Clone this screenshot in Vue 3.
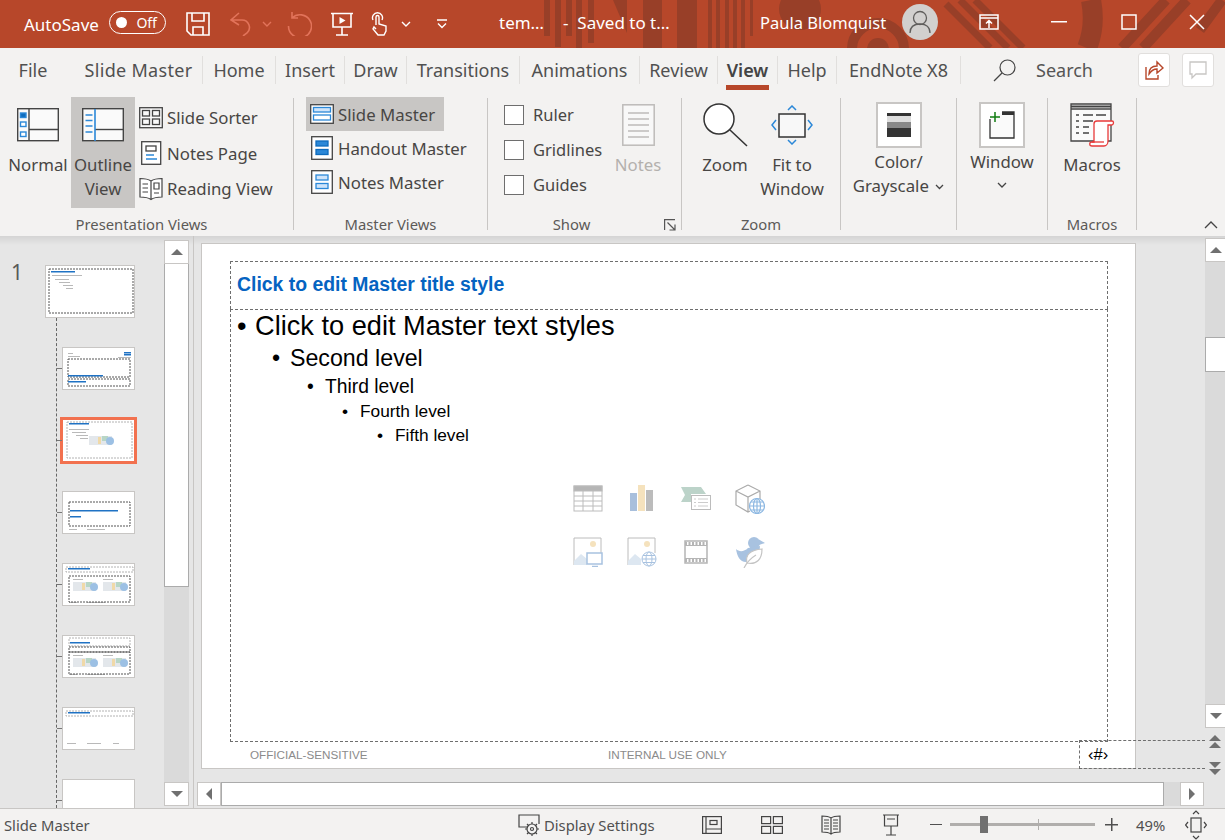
<script setup>
const tabs = [
  { label: 'File', w: 66 },
  { label: 'Slide Master', w: 137 },
  { label: 'Home', w: 73 },
  { label: 'Insert', w: 69 },
  { label: 'Draw', w: 62 },
  { label: 'Transitions', w: 113 },
  { label: 'Animations', w: 120 },
  { label: 'Review', w: 78 },
  { label: 'View', w: 60, active: true },
  { label: 'Help', w: 59 },
  { label: 'EndNote X8', w: 124 }
]

const levels = [
  'Click to edit Master text styles',
  'Second level',
  'Third level',
  'Fourth level',
  'Fifth level'
]

const footDots = [[4, 35, 9], [24, 35, 14], [50, 35, 6]]
const thumbs = [
  {
    first: true,
    dash: [[3, 3, 84, 44], [3, 7, 84, 0]],
    blue: [[5, 5, 24]],
    grey: [[6, 9, 30], [9, 13, 14], [13, 16, 11], [17, 19, 10], [20, 22, 7]]
  },
  {
    dash: [[5, 11, 62, 18], [5, 31, 62, 7]],
    blue: [[5, 27, 35], [5, 33, 18], [61, 4, 7], [61, 6, 7]],
    grey: [[5, 5, 5], [5, 8, 12], [55, 9, 13]]
  },
  {
    selected: true,
    light: [[4, 2, 65, 36], [4, 7, 65, 0]],
    blue: [[6, 3, 20]],
    grey: [[6, 9, 20], [9, 12, 14], [13, 15, 12], [17, 18, 8]],
    pics: [[26, 16]]
  },
  {
    dash: [[6, 10, 61, 24], [6, 28, 61, 0]],
    blue: [[7, 18, 48], [7, 24, 11]],
    grey: [[6, 37, 8], [24, 37, 18]]
  },
  {
    light: [[3, 3, 67, 5]],
    dash: [[6, 12, 61, 26], [36, 12, 0, 26]],
    blue: [[5, 4, 22]],
    grey: [[10, 15, 10], [40, 15, 10], [6, 38, 8], [24, 38, 18]],
    pics: [[10, 18], [40, 18]]
  },
  {
    light: [[6, 2, 61, 8]],
    dash: [[6, 11, 61, 5], [6, 16, 61, 22], [36, 16, 0, 22]],
    blue: [[7, 6, 20]],
    grey: [[10, 19, 10], [40, 19, 10], [6, 38, 8], [24, 38, 18]],
    pics: [[10, 22], [40, 22]]
  },
  {
    light: [[3, 3, 67, 5], [3, 37, 67, 0]],
    blue: [[5, 4, 22]],
    grey: footDots
  },
  {}
]
</script>

<template>
  <div class="app">
    <header class="titlebar">
      <svg class="pattern" width="1225" height="48">
        <g fill="#983f28">
          <rect x="544" width="6" height="36" />
          <rect x="555" width="6" height="47" />
          <rect x="566" width="6" height="36" />
          <rect x="576" width="6" height="48" />
          <rect x="588" width="6" height="43" />
          <path d="M613 0h14v33z" />
          <rect x="643" width="19" height="48" />
          <rect x="677" width="20" height="48" />
          <rect x="708" width="4" height="48" />
          <rect x="716" width="4" height="48" />
          <rect x="725" width="4" height="48" />
          <rect x="733" width="4" height="48" />
          <rect x="741" width="4" height="48" />
          <rect x="750" width="3" height="36" />
          <circle cx="800" cy="9" r="21" />
          <circle cx="878" cy="49" r="11" />
        </g>
        <g fill="none" stroke="#983f28">
          <circle cx="878" cy="49" r="26" stroke-width="10" />
          <path d="M1091 0q5 26-4 48" stroke-width="20" />
          <path d="M946 4l44 44M960 0l48 48M975 0l48 48" stroke-width="7" />
          <path d="M1122 48l44-48M1143 48l44-48M1200 30l22-30" stroke-width="10" />
        </g>
      </svg>
      <span class="autosave">AutoSave</span>
      <span class="toggle"><i></i>Off</span>
      <svg class="qa save" width="24" height="24" viewBox="0 0 24 24" fill="none" stroke="#fff" stroke-width="1.6">
        <path d="M1 1h22v22H5l-4-4zM6 1v8h12V1M7 23v-8h10v8" />
      </svg>
      <svg class="qa undo" width="23" height="24" viewBox="0 0 23 24" fill="none" stroke="#e2735a" stroke-width="1.6">
        <path d="M9 1L1 8l8 5M1 8h11a7.500 7.500 0 0 1 5 13l-4 3" />
      </svg>
      <svg class="qa chev faded" width="10" height="6" viewBox="0 0 10 6" fill="none" stroke="#e2735a" stroke-width="1.4"><path d="M1 1l4 4 4-4" /></svg>
      <svg class="qa redo" width="25" height="25" viewBox="0 0 25 25" fill="none" stroke="#e2735a" stroke-width="1.6">
        <path d="M5 1v6h6M5 7a11.500 11.500 0 1 1-3.500 8" />
      </svg>
      <svg class="qa show" width="24" height="24" viewBox="0 0 24 24" fill="none" stroke="#fff" stroke-width="1.6">
        <path d="M1 1.500h22M3 1.500V15h18V1.500M12 15v8M6 23h12" />
        <path d="M9.500 5l6 3.500-6 3.500z" fill="#fff" stroke="none" />
      </svg>
      <svg class="qa touch" width="18" height="25" viewBox="0 0 18 25" fill="none" stroke="#fff" stroke-width="1.4">
        <path d="M2 9a5 5 0 1 1 9 0M5 14V6a1.500 1.500 0 0 1 3 0v7l7 2v5l-2 4H7l-5-6 1-2 2 2" />
      </svg>
      <svg class="qa chev chev2" width="10" height="6" viewBox="0 0 10 6" fill="none" stroke="#fff" stroke-width="1.4"><path d="M1 1l4 4 4-4" /></svg>
      <svg class="qa more" width="12" height="10" viewBox="0 0 12 10" fill="none" stroke="#fff" stroke-width="1.4"><path d="M1 1h10M2 4.500l4 4 4-4" /></svg>
      <span class="doc">tem…</span>
      <span class="doc saved">-&nbsp; Saved to t…</span>
      <span class="user">Paula Blomquist</span>
      <svg class="avatar" width="36" height="36" viewBox="0 0 36 36" fill="none" stroke="#605e5c" stroke-width="1.3">
        <circle cx="18" cy="18" r="18" fill="#d2d0ce" stroke="none" />
        <circle cx="18" cy="14" r="6.500" />
        <path d="M8 29c0-6 4-9 10-9s10 3 10 9" />
      </svg>
      <svg class="win opts" width="20" height="16" viewBox="0 0 20 16" fill="none" stroke="#fff" stroke-width="1.5">
        <path d="M1 1h18v14H1zM1 4h18M10 14V7M7 9.500l3-3 3 3" />
      </svg>
      <svg class="win mini" width="16" height="2" viewBox="0 0 16 2"><rect width="16" height="1.500" fill="#fff" /></svg>
      <svg class="win maxi" width="16" height="16" viewBox="0 0 16 16" fill="none" stroke="#fff" stroke-width="1.5"><rect x="1" y="1" width="14" height="14" /></svg>
      <svg class="win close" width="16" height="16" viewBox="0 0 16 16" fill="none" stroke="#fff" stroke-width="1.5"><path d="M1 1l14 14M15 1L1 15" /></svg>
    </header>

    <nav class="tabs">
      <div v-for="t in tabs" :key="t.label" class="tab" :class="{ active: t.active }" :style="{ width: t.w + 'px' }">
        <span>{{ t.label }}</span>
      </div>
      <svg class="search-icon" width="23" height="23" viewBox="0 0 23 23" fill="none" stroke="#444" stroke-width="1.2">
        <circle cx="14.500" cy="8.500" r="7.500" /><path d="M9 14l-8 8" />
      </svg>
      <span class="search">Search</span>
      <div class="tab-btn share">
        <svg width="20" height="22" viewBox="0 0 20 22" fill="none" stroke="#b7472a" stroke-width="1.400">
          <path d="M2 8v12h12v-4M5 15c0-5 3-8 8-8V3l6 6-6 5v-4c-4 0-6 2-8 5z" />
        </svg>
      </div>
      <div class="tab-btn note">
        <svg width="20" height="20" viewBox="0 0 20 20" fill="none" stroke="#c8c6c4" stroke-width="1.300">
          <path d="M2 2h16v12H8l-4 4v-4H2z" />
        </svg>
      </div>
    </nav>

    <section class="ribbon">
      <div class="group g1">
        <div class="group-body">
          <div class="big normal">
            <div class="big-icon">
              <svg width="42" height="34" viewBox="0 0 42 34" fill="none" stroke="#444" stroke-width="1.400">
                <rect x=".7" y=".7" width="40.6" height="32" fill="#fafafa" />
                <path d="M12 1v32M12 21.500h29" />
                <g fill="#fff" stroke="#2b88d8"><rect x="3.500" y="5" width="5.500" height="4.500" fill="#0f6cbd" /><rect x="3.500" y="14" width="5.500" height="4.500" /><rect x="3.500" y="24" width="5.500" height="4.500" /></g>
              </svg>
            </div>
            <span>Normal</span>
          </div>
          <div class="big on outline">
            <div class="big-icon">
              <svg width="42" height="34" viewBox="0 0 42 34" fill="none" stroke="#444" stroke-width="1.400">
                <rect x=".7" y=".7" width="40.6" height="32" fill="#fafafa" />
                <path d="M13 21.500h28" />
                <path d="M13 1v32" stroke="#2b88d8" stroke-width="1.600" />
                <path d="M3.500 7h7M3.500 12.500h7M3.500 18h7M3.500 24h7" stroke="#2b88d8" />
              </svg>
            </div>
            <span>Outline</span>
            <span>View</span>
          </div>
          <div class="rows view-rows">
            <div class="row">
              <svg width="24" height="22" viewBox="0 0 24 22" fill="none" stroke="#444" stroke-width="1.300">
                <rect x=".7" y=".7" width="22.600" height="20" fill="#fafafa" /><rect x="3.500" y="3.500" width="7" height="5.500" /><rect x="13.500" y="3.500" width="7" height="5.500" /><rect x="3.500" y="12" width="7" height="5.500" /><rect x="13.500" y="12" width="7" height="5.500" />
              </svg>
              <span>Slide Sorter</span>
            </div>
            <div class="row">
              <svg width="24" height="24" viewBox="0 0 24 24" fill="none" stroke="#444" stroke-width="1.300">
                <rect x="2.700" y=".7" width="19" height="22.600" fill="#fff" /><rect x="7" y="5" width="10" height="5" /><path d="M7 14h8M7 18h11" stroke="#2b88d8" />
              </svg>
              <span>Notes Page</span>
            </div>
            <div class="row">
              <svg width="24" height="24" viewBox="0 0 24 24" fill="none" stroke="#444" stroke-width="1.200">
                <path d="M12 4C9 2 5 1.500 1 1.500V20c4 0 8 .5 11 2.500C15 20.500 19 20 23 20V1.500C19 1.500 15 2 12 4zM12 4v18.500" fill="#fff" />
                <path d="M3.500 7H9M3.500 11H9M3.500 15H9M15 6h5v6h-5zM15 16h5" />
              </svg>
              <span>Reading View</span>
            </div>
          </div>
        </div>
        <div class="group-label">Presentation Views</div>
      </div>

      <div class="group g2">
        <div class="group-body">
          <div class="rows master-rows">
            <div class="row on">
              <svg width="24" height="20" viewBox="0 0 24 20" fill="none" stroke="#444" stroke-width="1.300">
                <rect x=".7" y=".7" width="22.600" height="18.600" fill="#fff" />
                <g stroke="#2b88d8" fill="#cfe4fa"><rect x="3.500" y="3.500" width="17" height="4.500" /><rect x="3.500" y="11" width="17" height="5" fill="#fff" /></g>
              </svg>
              <span>Slide Master</span>
            </div>
            <div class="row">
              <svg class="narrow" width="22" height="24" viewBox="0 0 22 24" fill="none" stroke="#444" stroke-width="1.300">
                <rect x=".7" y=".7" width="20.600" height="22.600" fill="#fff" />
                <g stroke="#0f6cbd" fill="#2b88d8"><rect x="5" y="5" width="12" height="5" /><rect x="5" y="13.500" width="12" height="5" /></g>
              </svg>
              <span>Handout Master</span>
            </div>
            <div class="row">
              <svg class="narrow" width="22" height="24" viewBox="0 0 22 24" fill="none" stroke="#444" stroke-width="1.300">
                <rect x=".7" y=".7" width="20.600" height="22.600" fill="#fff" />
                <g stroke="#2b88d8" fill="#cfe4fa"><rect x="5" y="5" width="12" height="5" /><rect x="5" y="13.500" width="12" height="5" /></g>
              </svg>
              <span>Notes Master</span>
            </div>
          </div>
        </div>
        <div class="group-label">Master Views</div>
      </div>

      <div class="group g3">
        <div class="group-body">
          <div class="rows check-rows">
            <label class="check"><i></i>Ruler</label>
            <label class="check"><i></i>Gridlines</label>
            <label class="check"><i></i>Guides</label>
          </div>
          <div class="big disabled notes-btn">
            <div class="big-icon">
              <svg width="33" height="42" viewBox="0 0 33 42" fill="none" stroke="#bdbbb9" stroke-width="1.500">
                <rect x=".8" y=".8" width="31.400" height="40.400" fill="#f8f8f8" /><path d="M6 9h21M6 15h21M6 21h21M6 27h21M6 33h21" />
              </svg>
            </div>
            <span>Notes</span>
          </div>
        </div>
        <div class="group-label">Show</div>
        <svg class="launcher" width="12" height="12" viewBox="0 0 12 12" fill="none" stroke="#555" stroke-width="1.200">
          <path d="M.6 11V.6H11M3.500 3.500l7 7M11 5.500V11H5.500" />
        </svg>
      </div>

      <div class="group g4">
        <div class="group-body">
          <div class="big zoom-btn">
            <div class="big-icon">
              <svg width="45" height="44" viewBox="0 0 45 44" fill="none" stroke="#333" stroke-width="1.500">
                <circle cx="16" cy="16" r="15" fill="#fff" /><path d="M27 27l17 16" />
              </svg>
            </div>
            <span>Zoom</span>
          </div>
          <div class="big zoom-btn">
            <div class="big-icon">
              <svg width="42" height="40" viewBox="0 0 42 40" fill="none" stroke="#2b88d8" stroke-width="1.500">
                <rect x="8" y="9" width="26" height="23" fill="#f8f8f8" stroke="#333" />
                <path d="M17 5l4-4 4 4M17 35l4 4 4-4M5 15l-4 5 4 5M37 15l4 5-4 5" />
              </svg>
            </div>
            <span>Fit to</span>
            <span>Window</span>
          </div>
        </div>
        <div class="group-label">Zoom</div>
      </div>

      <div class="group g5">
        <div class="group-body">
          <div class="big tall">
            <div class="big-icon">
              <div class="frame">
                <svg width="24" height="24" viewBox="0 0 24 24">
                  <rect width="24" height="3" fill="#333" /><rect y="3" width="24" height="6" fill="#ddd" /><rect y="9" width="24" height="6" fill="#888" /><rect y="15" width="24" height="9" fill="#333" />
                </svg>
              </div>
            </div>
            <span>Color/</span>
            <span class="with-chev">Grayscale
              <svg width="9" height="6" viewBox="0 0 9 6" fill="none" stroke="#444" stroke-width="1.300"><path d="M1 1l3.500 3.500L8 1" /></svg>
            </span>
          </div>
        </div>
        <div class="group-label"></div>
      </div>

      <div class="group g6">
        <div class="group-body">
          <div class="big tall">
            <div class="big-icon">
              <div class="frame">
                <svg width="26" height="28" viewBox="0 0 26 28" fill="none" stroke="#333" stroke-width="1.300">
                  <path d="M1 8v19h24V1H13" fill="#fafafa" /><path d="M13 2.500h12" stroke-width="3" />
                  <path d="M6 1v10M1 6h10" stroke="#107c10" stroke-width="1.500" />
                </svg>
              </div>
            </div>
            <span>Window</span>
            <svg class="under-chev" width="10" height="6" viewBox="0 0 10 6" fill="none" stroke="#444" stroke-width="1.300"><path d="M1 1l4 4 4-4" /></svg>
          </div>
        </div>
        <div class="group-label"></div>
      </div>

      <div class="group g7">
        <div class="group-body">
          <div class="big">
            <div class="big-icon">
              <svg width="45" height="44" viewBox="0 0 45 44" fill="none" stroke="#444" stroke-width="1.300">
                <path d="M1 1h40v37H1zM1 6h40" fill="#fafafa" />
                <path d="M1 3.500h40" stroke-width="2" />
                <path d="M6 12h3M13 12h10M26 12h10M6 18h3M13 18h10M6 24h3M13 24h6M6 30h3M13 30h6" />
                <path d="M24 21c0-2 1-3 3-3h15c2 0 2 3 0 4h-4v16c0 3-2 5-4 5H22c-3 0-3-4 0-4h2z" stroke="#e83a3a" fill="#fff" />
                <path d="M22 39h12" stroke="#e83a3a" />
              </svg>
            </div>
            <span>Macros</span>
          </div>
        </div>
        <div class="group-label">Macros</div>
      </div>

      <svg class="collapse" width="14" height="8" viewBox="0 0 14 8" fill="none" stroke="#444" stroke-width="1.300"><path d="M1 7l6-6 6 6" /></svg>
    </section>

    <main class="workspace">
      <aside class="thumbs">
        <span class="slide-no">1</span>
        <div class="tree"></div>
        <div v-for="(t, i) in thumbs" :key="i" class="thumb" :class="{ first: t.first, selected: t.selected }">
          <svg width="100%" height="100%">
            <g v-if="t.grey" fill="#8a8a8a" opacity=".6">
              <rect v-for="(g, k) in t.grey" :key="k" :x="g[0]" :y="g[1]" :width="g[2]" height="1" />
            </g>
            <g v-if="t.pics">
              <g v-for="(p, k) in t.pics" :key="k" :transform="`translate(${p[0]} ${p[1]})`">
                <rect width="23" height="9" fill="#e3e7eb" />
                <rect x="9" y="1" width="3" height="7" fill="#f0d9a8" />
                <rect x="13" width="6" height="5" fill="#b8d6c6" />
                <circle cx="21" cy="5" r="4" fill="#9cc0e4" />
              </g>
            </g>
            <g v-if="t.light" fill="none" stroke="#a9a9a9" stroke-width=".9" stroke-dasharray="2 1">
              <rect v-for="(d, k) in t.light" :key="k" :x="d[0]" :y="d[1]" :width="d[2]" :height="d[3]" />
            </g>
            <g v-if="t.dash" fill="none" stroke="#555" stroke-width="1" stroke-dasharray="2 1">
              <rect v-for="(d, k) in t.dash" :key="k" :x="d[0]" :y="d[1]" :width="d[2]" :height="d[3]" />
            </g>
            <g v-if="t.blue" fill="#1f72c4">
              <rect v-for="(b, k) in t.blue" :key="k" :x="b[0]" :y="b[1]" :width="b[2]" height="1.500" />
            </g>
          </svg>
        </div>
      </aside>

      <div class="vbar left-bar">
        <div class="sbtn"><i class="tri up"></i></div>
        <div class="sthumb"></div>
        <div class="strack"></div>
        <div class="sbtn"><i class="tri down"></i></div>
      </div>

      <div class="editor">
        <div class="editor-top">
          <div class="stage">
            <article class="slide">
              <div class="ph title-ph">Click to edit Master title style</div>
              <div class="ph body-ph">
                <ul>
                  <li v-for="(text, i) in levels" :key="text" :class="'lv' + (i + 1)">
                    <span class="bullet">•</span>{{ text }}
                  </li>
                </ul>
                <div class="ph-icons">
                  <svg width="30" height="27" viewBox="0 0 30 27" fill="none" stroke="#bcbcbc">
                    <rect x="1" y="1" width="28" height="25" /><rect x="1" y="1" width="28" height="5" fill="#b5b5b5" /><path d="M1 11h28M1 16h28M1 21h28M10 6v20M20 6v20" />
                  </svg>
                  <svg width="24" height="27" viewBox="0 0 24 27">
                    <rect y="8" width="7" height="18" fill="#a8bfdc" /><rect x="8" width="7" height="26" fill="#f5e2bd" /><rect x="16" y="5" width="7" height="21" fill="#bcbcbc" />
                  </svg>
                  <svg width="30" height="25" viewBox="0 0 30 25">
                    <path d="M0 1h20l5 7H10v8H0l4-7z" fill="#bcd3c9" /><rect x="10.500" y="9.500" width="19" height="14" fill="#fff" stroke="#bcbcbc" /><path d="M17 13h10M17 16.500h10M17 20h10" stroke="#ccc" /><path d="M13 13h2M13 16.500h2M13 20h2" stroke="#ccc" />
                  </svg>
                  <svg width="30" height="30" viewBox="0 0 30 30" fill="none" stroke="#aaa" stroke-width="1.200">
                    <path d="M13 1l12 6v8M13 1L1 7v14l12 7 2-1M1 7l12 6 12-6M13 13v15" fill="#fff" />
                    <circle cx="22" cy="22" r="7.500" fill="#fff" stroke="#8db8e2" /><path d="M14.500 22h15M22 14.500v15M16 18h12M16 26h12" stroke="#8db8e2" /><ellipse cx="22" cy="22" rx="3.500" ry="7.500" stroke="#8db8e2" />
                  </svg>
                  <svg width="30" height="30" viewBox="0 0 30 30">
                    <path d="M1 28V1h27v15" fill="#fff" stroke="#bcbcbc" />
                    <path d="M1 28v-4l7-7 6 5v6z" fill="#dde7f1" /><circle cx="20" cy="7" r="3" fill="#f5e2bd" />
                    <rect x="14" y="16" width="15" height="11" fill="#fff" stroke="#a8c2e0" stroke-width="1.500" /><path d="M19 29.500h6" stroke="#a8c2e0" stroke-width="1.500" />
                  </svg>
                  <svg width="30" height="30" viewBox="0 0 30 30">
                    <path d="M1 28V1h27v15" fill="#fff" stroke="#bcbcbc" />
                    <path d="M1 28v-4l7-7 6 5v6z" fill="#dde7f1" /><circle cx="20" cy="7" r="3" fill="#f5e2bd" />
                    <g fill="#fff" stroke="#a8c2e0"><circle cx="22" cy="22" r="7" /><ellipse cx="22" cy="22" rx="3" ry="7" /><path d="M15 22h14M16 18.500h12M16 25.500h12" /></g>
                  </svg>
                  <svg width="24" height="24" viewBox="0 0 24 24">
                    <rect x="1" y="1" width="22" height="22" fill="#fff" stroke="#b5b5b5" stroke-width="1.500" />
                    <path d="M1 3.500h22M1 20.500h22" stroke="#b5b5b5" stroke-width="3" stroke-dasharray="2 1.500" />
                    <path d="M1 5.500h22M1 18.500h22" stroke="#b5b5b5" />
                  </svg>
                  <svg width="29" height="32" viewBox="0 0 29 32">
                    <circle cx="18" cy="7" r="6" fill="#a8c2e0" />
                    <path d="M23 3.500L29 7l-6 2zM0 13c3 3 8 3 12-1l12-2c0 9-6 14-14 16C4 26 1 20 0 13z" fill="#a8c2e0" />
                    <path d="M11 27c-2-8 3-13 15-14 0 10-5 16-15 14z" fill="#fff" stroke="#c4c4c4" stroke-width="1.200" /><path d="M8 32c3-6 7-10 12-13" fill="none" stroke="#c4c4c4" stroke-width="1.200" />
                  </svg>
                </div>
              </div>
              <footer class="slide-foot">
                <span class="foot-left">OFFICIAL-SENSITIVE</span>
                <span>INTERNAL USE ONLY</span>
              </footer>
              <div class="slide-num">‹#›</div>
            </article>
          </div>
          <div class="vbar right-bar">
            <div class="sbtn"><i class="tri up"></i></div>
            <div class="strack r1"></div>
            <div class="sthumb"></div>
            <div class="strack"></div>
            <div class="sbtn"><i class="tri down"></i></div>
            <div class="page-nav">
              <span class="dbl"><i class="tri up small"></i><i class="tri up small"></i></span>
              <span class="dbl"><i class="tri down small"></i><i class="tri down small"></i></span>
            </div>
          </div>
        </div>
        <div class="hbar">
          <div class="sbtn wide"><i class="tri left"></i></div>
          <div class="hthumb"></div>
          <div class="htrack"></div>
          <div class="sbtn wide"><i class="tri right"></i></div>
        </div>
      </div>
    </main>

    <footer class="status">
      <span class="st-label">Slide Master</span>
      <svg class="st-display" width="24" height="24" viewBox="0 0 24 24" fill="none" stroke="#444" stroke-width="1.200">
        <path d="M10 14H1V2h20v9" />
        <circle cx="14" cy="16" r="5" /><circle cx="14" cy="16" r="1.500" /><path d="M14 9v2M14 21v2M7 16h2M19 16h2M9 11l1.500 1.500M17.500 19.500L19 21M19 11l-1.500 1.500M10.500 19.500L9 21" />
      </svg>
      <span class="st-text">Display Settings</span>
      <svg class="st-view v1" width="20" height="18" viewBox="0 0 20 18" fill="none" stroke="#444" stroke-width="1.200">
        <rect x=".6" y=".6" width="18.800" height="16.800" /><path d="M4 1v16M4 13h15" /><rect x="8" y="4.500" width="7" height="4" />
      </svg>
      <svg class="st-view v2" width="22" height="18" viewBox="0 0 22 18" fill="none" stroke="#444" stroke-width="1.200">
        <rect x=".6" y=".6" width="9" height="7" /><rect x="12.400" y=".6" width="9" height="7" /><rect x=".6" y="10.400" width="9" height="7" /><rect x="12.400" y="10.400" width="9" height="7" />
      </svg>
      <svg class="st-view v3" width="20" height="20" viewBox="0 0 20 20" fill="none" stroke="#444" stroke-width="1.200">
        <path d="M10 3C8 1.500 4 1 1 1v16c3 0 7 .5 9 2 2-1.500 6-2 9-2V1c-3 0-7 .5-9 2zM10 3v16" />
        <path d="M3 5h5M3 8h5M3 11h5M3 14h5M12 5h5M12 8h5M12 11h5M12 14h5" />
      </svg>
      <svg class="st-view v4" width="18" height="22" viewBox="0 0 18 22" fill="none" stroke="#444" stroke-width="1.200">
        <path d="M1 1h16M2.500 1v11h13V1M9 12v9M4 21h10M5 5h8" />
      </svg>
      <span class="zoom-minus"></span>
      <div class="slider">
        <i class="tick"></i>
        <i class="knob"></i>
      </div>
      <span class="zoom-plus"></span>
      <span class="pct">49%</span>
      <svg class="st-fit" width="22" height="30" viewBox="0 0 22 30" fill="none" stroke="#444" stroke-width="1.200">
        <rect x="6" y="8" width="10" height="14" /><path d="M8 4l3-3 3 3M8 26l3 3 3-3M3 12l-2.500 3L3 18M19 12l2.500 3-2.500 3" />
      </svg>
    </footer>
  </div>
</template>

<style>
html,
body {
  margin: 0;
  overflow: hidden;
}
</style>

<style scoped>
.app {
  width: 1225px;
  height: 840px;
  overflow: hidden;
  font-family: 'Noto Sans', 'Open Sans', sans-serif;
  color: #444;
  background: #f3f2f1;
}
.titlebar {
  position: relative;
  display: flex;
  align-items: center;
  height: 48px;
  background: #b7472a;
  color: #fff;
  font-size: 17px;
}
.pattern {
  position: absolute;
  left: 0;
  top: 0;
}
.titlebar > *:not(.pattern) {
  position: relative;
}
.autosave {
  margin-left: 24px;
  width: 85px;
}
.toggle {
  box-sizing: border-box;
  display: flex;
  align-items: center;
  justify-content: flex-end;
  width: 57px;
  height: 23px;
  padding-right: 8px;
  margin-top: -4px;
  border: 1.300px solid #fff;
  border-radius: 12px;
  font-size: 14px;
}
.toggle i {
  position: absolute;
  left: 6px;
  top: 5px;
  width: 11px;
  height: 11px;
  border-radius: 50%;
  background: #fff;
}
.qa {
  margin-top: -1px;
}
.save { margin-left: 20px; }
.undo { margin-left: 20px; }
.chev { margin-left: 9px; }
.chev2 { margin-left: 12px; }
.redo { margin-left: 15px; }
.show { margin-left: 18px; }
.touch { margin-left: 17px; }
.more { margin-left: 25px; }
.doc {
  margin-top: -3px;
}
.doc:not(.saved) {
  margin-left: 51px;
  width: 64px;
}
.saved {
  width: 197px;
}
.user {
  width: 142px;
  margin-top: -3px;
  font-size: 16.500px;
}
.avatar {
  margin-top: -4px;
}
.win {
  margin-top: -4px;
}
.opts { margin-left: 41px; }
.mini { margin-left: 52px; }
.maxi { margin-left: 54px; }
.close { margin-left: 52px; }

.tabs {
  position: relative;
  display: flex;
  align-items: flex-start;
  height: 44px;
  font-size: 18px;
}
.tab {
  box-sizing: border-box;
  display: flex;
  justify-content: center;
  height: 28px;
  margin-top: 8px;
  line-height: 28px;
  border-right: 1px solid #e1dfdd;
  color: #505050;
}
.tab:first-child {
  border-right: 0;
}
.tab:nth-child(2) {
  padding-left: 9px;
  letter-spacing: 0.3px;
}
.tab span {
  position: relative;
  height: 34px;
}
.tab.active {
  font-weight: 600;
  color: #444;
}
.tab.active span::after {
  content: '';
  position: absolute;
  left: -1px;
  right: -1px;
  bottom: 0;
  height: 5px;
  background: #b7472a;
}
.search-icon {
  margin: 11px 0 0 32px;
}
.search {
  margin: 8px 0 0 20px;
  width: 102px;
  line-height: 28px;
  color: #555;
}
.tab-btn {
  box-sizing: border-box;
  display: flex;
  align-items: center;
  justify-content: center;
  width: 32px;
  height: 34px;
  margin-top: 5px;
  background: #fff;
  border: 1px solid #e1dfdd;
  border-radius: 3px;
}
.note {
  margin-left: 12px;
}

.ribbon {
  position: relative;
  display: flex;
  height: 138px;
  padding-top: 6px;
  font-size: 16.800px;
  color: #484644;
}
.group {
  position: relative;
  box-sizing: border-box;
  display: flex;
  flex-direction: column;
  height: 132px;
  border-right: 1.500px solid #c8c6c4;
}
.g1 { width: 294px; }
.g2 { width: 194px; }
.g3 { width: 194px; }
.g4 { width: 159px; }
.g5 { width: 116px; }
.g6 { width: 91px; }
.g7 { width: 89px; }
.group-body {
  display: flex;
  height: 114px;
  margin-top: -1px;
  flex-shrink: 0;
}
.group-label {
  font-size: 14.800px;
  line-height: 26px;
  text-align: center;
  color: #5c5a58;
}
.g1 .group-label { padding-right: 10px; }
.g3 .group-label { padding-right: 26px; }
.g1 .group-body { padding-left: 8px; }
.g2 .group-body { padding-left: 12px; }
.g3 .group-body { padding-left: 16px; }
.g4 .group-body { padding-left: 13px; gap: 7px; }
.big {
  box-sizing: border-box;
  display: flex;
  flex-direction: column;
  align-items: center;
  width: 100%;
  height: 111px;
  line-height: 24px;
  white-space: nowrap;
}
.big-icon {
  display: flex;
  align-items: center;
  justify-content: center;
  height: 56px;
  flex-shrink: 0;
}
.big.tall .big-icon {
  height: 53px;
}
.normal { width: 60px; }
.outline { width: 64px; margin-left: 3px; }
.on {
  background: #c8c6c4;
}
.zoom-btn { width: 60px; }
.disabled { color: #b3b0ad; }
.notes-btn { width: 46px; }
.frame {
  box-sizing: border-box;
  display: flex;
  align-items: center;
  justify-content: center;
  width: 46px;
  height: 46px;
  margin-top: 3px;
  background: #fff;
  border: 2.500px solid #c8c6c4;
}
.with-chev svg {
  margin: 0 0 2px 2px;
}
.under-chev {
  margin-top: 8px;
}
.rows {
  display: flex;
  flex-direction: column;
}
.row {
  display: flex;
  align-items: center;
  white-space: nowrap;
}
.row svg {
  flex-shrink: 0;
}
.view-rows {
  margin-left: 4px;
  padding-top: 3px;
}
.view-rows .row {
  height: 35.500px;
  gap: 4px;
}
.master-rows {
  width: 138px;
  flex-shrink: 0;
}
.master-rows .row {
  height: 34px;
  gap: 4px;
  padding-left: 4px;
}
.narrow {
  margin: 0 1px;
}
.check-rows {
  width: 111px;
}
.check {
  display: flex;
  align-items: center;
  height: 35px;
  gap: 9px;
  font-size: 16.500px;
}
.check i {
  box-sizing: border-box;
  width: 20px;
  height: 20px;
  background: #fff;
  border: 1px solid #6e6e6e;
}
.launcher {
  position: absolute;
  right: 5px;
  top: 121px;
}
.collapse {
  position: absolute;
  left: 1204px;
  top: 129px;
}

.workspace {
  display: flex;
  height: 572px;
  background: linear-gradient(#d4d4d4, #e6e6e6 9px);
}
.thumbs {
  position: relative;
  box-sizing: border-box;
  width: 164px;
  height: 572px;
  padding: 29px 0 0 62px;
  overflow: hidden;
  flex-shrink: 0;
}
.slide-no {
  position: absolute;
  left: 11px;
  top: 22px;
  font-size: 21px;
  line-height: 28px;
  color: #595959;
}
.tree {
  position: absolute;
  left: 56px;
  top: 82px;
  bottom: 0;
  border-left: 1px dashed #666;
}
.thumb {
  position: relative;
  box-sizing: border-box;
  width: 73px;
  height: 43px;
  margin-bottom: 29px;
  background: #fff;
  border: 1.300px solid #c8c6c4;
}
.thumb svg {
  display: block;
  filter: blur(0.5px);
}
.thumb::before {
  content: '';
  position: absolute;
  left: -6px;
  top: 20px;
  width: 5px;
  border-top: 1px dashed #777;
}
.thumb.first {
  width: 90px;
  height: 53px;
  margin-left: -17px;
}
.thumb.first::before {
  display: none;
}
.thumb.selected {
  outline: 3px solid #f2714f;
  outline-offset: -1px;
  border-color: #fff;
}
.vbar {
  display: flex;
  flex-direction: column;
  flex-shrink: 0;
}
.left-bar {
  box-sizing: border-box;
  width: 25px;
  height: 572px;
  padding: 4px 0 2px;
  margin-right: 4px;
}
.sbtn {
  box-sizing: border-box;
  display: flex;
  align-items: center;
  justify-content: center;
  height: 24px;
  background: #fff;
  border: 1px solid #c8c6c4;
  flex-shrink: 0;
}
.sbtn.wide {
  width: 24px;
}
.sthumb {
  box-sizing: border-box;
  height: 323px;
  background: #fff;
  border: 1px solid #ababab;
  border-width: 0 1.300px 1.300px 1.300px;
  flex-shrink: 0;
}
.strack {
  flex: 1;
  background: #dadada;
}
.tri {
  width: 0;
  height: 0;
  border-style: solid;
  border-color: transparent;
}
.tri.up { border-width: 0 6px 6px; border-bottom-color: #707070; }
.tri.down { border-width: 6px 6px 0; border-top-color: #707070; }
.tri.left { border-width: 6px 6px 6px 0; border-right-color: #707070; }
.tri.right { border-width: 6px 0 6px 6px; border-left-color: #707070; }
.tri.small { display: block; margin-bottom: 1px; }
.editor {
  flex: 1;
  min-width: 0;
  display: flex;
  flex-direction: column;
  border-left: 1.500px solid #c8c6c4;
}
.editor-top {
  position: relative;
  display: flex;
  height: 546px;
}
.stage {
  flex: 1;
  padding: 7px 0 0 7px;
}
.slide {
  position: relative;
  box-sizing: border-box;
  width: 935px;
  height: 526px;
  padding: 17px 0 0 28px;
  background: #fff;
  border: 1.300px solid #c8c6c4;
  font-family: 'Liberation Sans', Arial, sans-serif;
  color: #000;
}
.ph {
  box-sizing: border-box;
  width: 878px;
  border: 1px dashed #6e6e6e;
}
.title-ph {
  height: 48px;
  padding-left: 6px;
  font-size: 19.400px;
  font-weight: 700;
  line-height: 45px;
  color: #0563c1;
  border-bottom: 0;
}
.body-ph {
  height: 433px;
}
ul {
  list-style: none;
  margin: 0;
  padding: 0;
}
li {
  display: flex;
  white-space: nowrap;
}
.bullet {
  width: 18px;
  flex-shrink: 0;
}
.lv1 { padding-left: 6px; font-size: 27.200px; line-height: 32px; }
.lv2 { padding-left: 41px; font-size: 23.200px; line-height: 32px; }
.lv3 { padding-left: 76px; font-size: 19.300px; line-height: 26px; }
.lv4 { padding-left: 111px; font-size: 17.300px; line-height: 22px; }
.lv5 { padding-left: 146px; font-size: 17.300px; line-height: 26px; }
.ph-icons {
  display: grid;
  grid-template-columns: repeat(4, 54px);
  grid-auto-rows: 53px;
  align-items: center;
  justify-items: center;
  justify-content: center;
  margin-top: 24px;
}
.slide-foot {
  display: flex;
  padding: 6px 0 0 20px;
  font-size: 11.700px;
  line-height: 13px;
  color: #8b8b8b;
}
.foot-left {
  width: 358px;
}
.slide-num {
  box-sizing: border-box;
  position: absolute;
  left: 877px;
  top: 496px;
  width: 126px;
  height: 29px;
  padding-left: 8px;
  border: 1px dashed #6e6e6e;
  border-right: 0;
  font-size: 16.500px;
  line-height: 27px;
}
.right-bar {
  width: 20px;
  height: 546px;
  padding-top: 2px;
  box-sizing: border-box;
}
.right-bar .sthumb {
  height: 35px;
  border-width: 1.300px 0 1.300px 1.300px;
}
.right-bar .sbtn {
  border-right: 0;
}
.strack.r1 {
  flex: none;
  height: 75px;
}
.page-nav {
  box-sizing: border-box;
  display: flex;
  flex-direction: column;
  align-items: center;
  gap: 13px;
  height: 54px;
  padding-top: 7px;
  flex-shrink: 0;
}
.dbl {
  display: block;
}
.hbar {
  display: flex;
  height: 24px;
  margin-left: 3px;
  width: 1007px;
}
.hthumb {
  box-sizing: border-box;
  width: 943px;
  background: #fff;
  border: 1.300px solid #ababab;
}
.htrack {
  flex: 1;
  background: #dadada;
}

.status {
  display: flex;
  align-items: center;
  box-sizing: border-box;
  height: 32px;
  border-top: 1px solid #c8c6c4;
  background: #f3f2f1;
  font-size: 14.800px;
  color: #505050;
}
.st-label {
  margin-left: 4px;
  width: 514px;
}
.st-text {
  margin-left: 2px;
  width: 158px;
}
.v1 { margin-left: 0; }
.v2 { margin-left: 39px; }
.v3 { margin-left: 38px; }
.v4 { margin-left: 41px; }
.zoom-minus {
  width: 12px;
  height: 1.500px;
  margin-left: 30px;
  background: #505050;
}
.slider {
  position: relative;
  width: 145px;
  height: 3px;
  margin-left: 8px;
  background: #b0aeac;
}
.knob {
  position: absolute;
  left: 30px;
  top: -7px;
  width: 8px;
  height: 17px;
  background: #707070;
}
.tick {
  position: absolute;
  left: 88px;
  top: -4px;
  width: 1px;
  height: 11px;
  background: #b0aeac;
}
.zoom-plus {
  position: relative;
  width: 13px;
  height: 13px;
  margin-left: 10px;
  background: linear-gradient(#505050, #505050) center / 13px 1.500px no-repeat, linear-gradient(#505050, #505050) center / 1.500px 13px no-repeat;
}
.pct {
  margin-left: 18px;
  width: 49px;
}
.st-fit {
  flex-shrink: 0;
}
</style>
